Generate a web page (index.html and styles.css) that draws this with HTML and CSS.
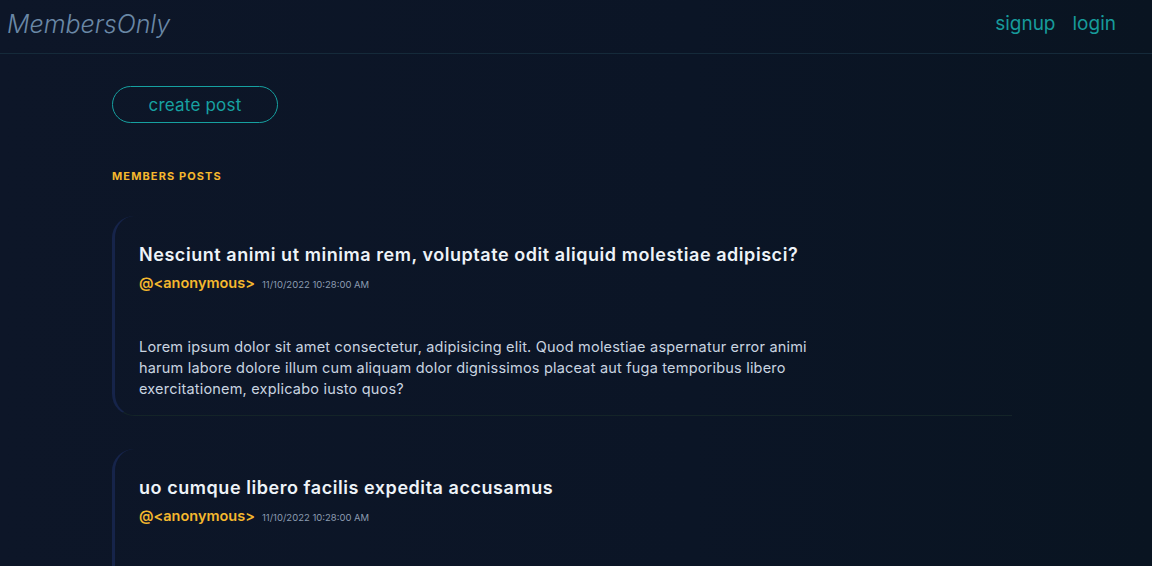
FILE: index.html
```html
<!DOCTYPE html>
<html lang="en">
<head>
<meta charset="utf-8">
<title>MembersOnly</title>
<link rel="stylesheet" href="styles.css">
</head>
<body>
<header class="topbar">
  <a class="brand" href="#">MembersOnly</a>
  <nav class="nav">
    <a href="#">signup</a>
    <a href="#">login</a>
  </nav>
</header>
<main class="main">
  <a class="btn-create" href="#">create post</a>
  <h2 class="section-label">MEMBERS POSTS</h2>
  <section class="posts">
    <article class="post">
      <h3 class="post-title">Nesciunt animi ut minima rem, voluptate odit aliquid molestiae adipisci?</h3>
      <div class="post-meta"><span class="author">@&lt;anonymous&gt;</span><span class="date">11/10/2022 10:28:00 AM</span></div>
      <p class="post-body">Lorem ipsum dolor sit amet consectetur, adipisicing elit. Quod molestiae aspernatur error animi harum labore dolore illum cum aliquam dolor dignissimos placeat aut fuga temporibus libero exercitationem, explicabo iusto quos?</p>
    </article>
    <article class="post post-tall">
      <h3 class="post-title">uo cumque libero facilis expedita accusamus</h3>
      <div class="post-meta"><span class="author">@&lt;anonymous&gt;</span><span class="date">11/10/2022 10:28:00 AM</span></div>
    </article>
  </section>
</main>
</body>
</html>
```
FILE: styles.css
```css
* { box-sizing: border-box; }
html, body { margin: 0; padding: 0; }
body {
  height: 566px;
  background: linear-gradient(90deg, #0d1628 0%, #0b1526 60%, #091421 100%);
  font-family: "Inter", "Open Sans", sans-serif;
  color: #e6edf5;
  overflow: hidden;
}
a { text-decoration: none; }
.topbar {
  height: 54px;
  display: flex;
  align-items: center;
  justify-content: space-between;
  padding: 0 36px 0 7px;
  border-bottom: 1px solid #152a3a;
}
.brand {
  font-size: 25px;
  font-style: italic;
  font-weight: 300;
  color: #6a88a6;
  margin-top: -6px;
}
.nav { display: flex; gap: 17px; margin-top: -6px; }
.nav a { color: #179b9b; font-size: 19px; font-weight: 400; }
.main { padding: 32px 0 0 112px; width: 1012px; }
.btn-create {
  display: inline-flex;
  align-items: center;
  justify-content: center;
  width: 166px;
  height: 37px;
  border: 1px solid #16a0a0;
  border-radius: 20px;
  color: #17a2a2;
  font-size: 17px;
  letter-spacing: 0.2px;
}
.section-label {
  margin: 46px 0 33px;
  font-size: 11px;
  font-weight: 700;
  letter-spacing: 1.1px;
  color: #f5b82e;
}
.posts { display: flex; flex-direction: column; gap: 33px; }
.post {
  border-left: 3px solid #16244a;
  border-bottom: 1px solid #142428;
  border-radius: 22px 0 0 22px;
  padding: 25px 26px 16px 24px;
}
.post-tall { min-height: 200px; }
.post-title {
  margin: 0;
  font-size: 18px;
  line-height: 27px;
  font-weight: 600;
  letter-spacing: 0.55px;
  color: #eef3f8;
}
.post-meta { display: flex; align-items: baseline; gap: 7px; margin-top: 6px; }
.author { font-size: 14.5px; font-weight: 600; color: #f5b82e; }
.date { font-size: 9.5px; color: #8b9bb0; }
.post-body {
  margin: 45px 0 0;
  max-width: 700px;
  font-size: 14.5px;
  line-height: 21px;
  letter-spacing: 0.2px;
  color: #c9d4e0;
}
```
